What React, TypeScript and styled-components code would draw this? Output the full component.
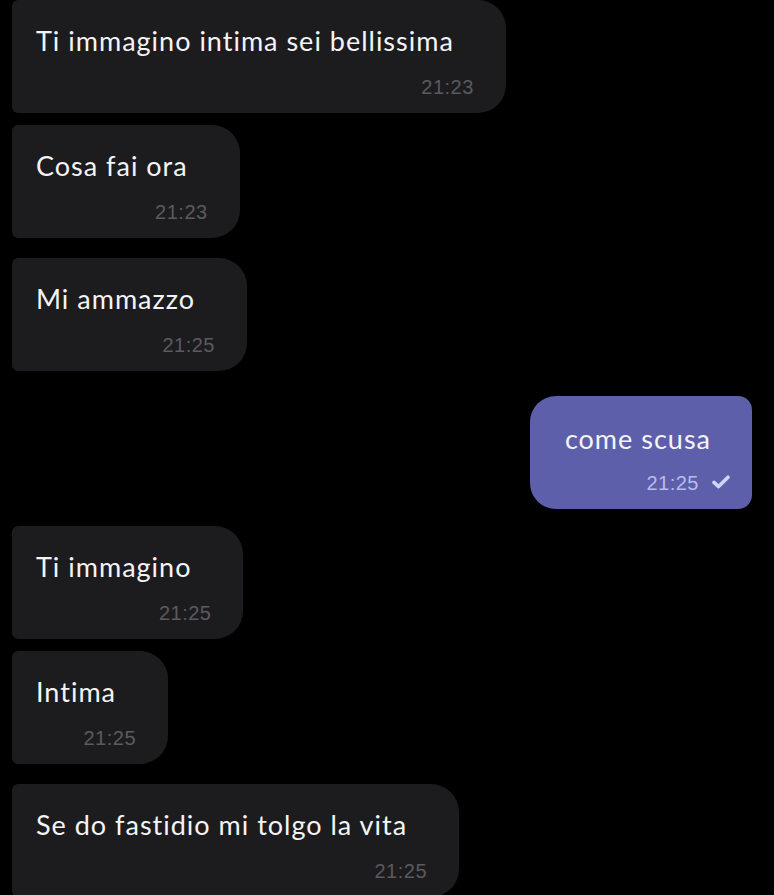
import React from 'react';
import styled, { createGlobalStyle } from 'styled-components';

type Msg = {
	text: string;
	time: string;
	mine?: boolean;
	gap: number;
};

const messages: Msg[] = [
	{ text: 'Ti immagino intima sei bellissima', time: '21:23', gap: 0 },
	{ text: 'Cosa fai ora', time: '21:23', gap: 12 },
	{ text: 'Mi ammazzo', time: '21:25', gap: 20 },
	{ text: 'come scusa', time: '21:25', mine: true, gap: 25 },
	{ text: 'Ti immagino', time: '21:25', gap: 17 },
	{ text: 'Intima', time: '21:25', gap: 12 },
	{ text: 'Se do fastidio mi tolgo la vita', time: '21:25', gap: 20 },
];

const CheckIcon = () => (
	<svg width="18" height="14" viewBox="0 0 18 14" fill="none">
		<path d="M2 7.4 L6.6 11.6 L16 2.2" stroke="currentColor" strokeWidth="3.6" strokeLinecap="round" strokeLinejoin="round" />
	</svg>
);

const App = () => {
	return (
		<>
			<GlobalStyle />
			<Chat>
				{messages.map((m, i) => (
					<Bubble key={i} $mine={m.mine} $gap={m.gap}>
						<Text $mine={m.mine}>{m.text}</Text>
						<Meta $mine={m.mine}>
							<span>{m.time}</span>
							{m.mine && <CheckIcon />}
						</Meta>
					</Bubble>
				))}
			</Chat>
		</>
	);
};

const GlobalStyle = createGlobalStyle`
html, body {
	margin: 0;
	padding: 0;
	background: #000;
}
body {
	width: 774px;
	height: 895px;
	overflow: hidden;
}
`;

const Chat = styled.div`
display: flex;
flex-direction: column;
align-items: flex-start;
padding: 0 22px 0 12px;
background: #000;
min-height: 895px;
box-sizing: border-box;
`;

const Bubble = styled.div<{ $mine?: boolean; $gap: number }>`
display: flex;
flex-direction: column;
box-sizing: border-box;
height: 113px;
margin-top: ${(p) => p.$gap}px;
align-self: ${(p) => (p.$mine ? 'flex-end' : 'flex-start')};
background: ${(p) => (p.$mine ? '#5d5fab' : '#1c1c1f')};
border-radius: ${(p) => (p.$mine ? '26px 14px 14px 26px' : '6px 28px 28px 6px')};
padding: ${(p) => (p.$mine ? '27px 22px 14px 35px' : '25px 32px 14px 24px')};
`;

const Text = styled.div<{ $mine?: boolean }>`
font-family: Lato, 'Noto Sans', sans-serif;
font-size: 27px;
line-height: 32px;
letter-spacing: 1px;
color: #f4f4f6;
white-space: nowrap;
padding-right: ${(p) => (p.$mine ? '19px' : '20px')};
`;

const Meta = styled.div<{ $mine?: boolean }>`
display: flex;
align-items: center;
justify-content: flex-end;
gap: 13px;
margin-top: auto;
font-family: 'Liberation Sans', Arial, sans-serif;
font-size: 20px;
line-height: 24px;
letter-spacing: 0.5px;
color: ${(p) => (p.$mine ? '#b9bbec' : '#5a5a5f')};

svg {
	color: #d2d3f5;
	margin-top: -2px;
}
`;

export default App;
